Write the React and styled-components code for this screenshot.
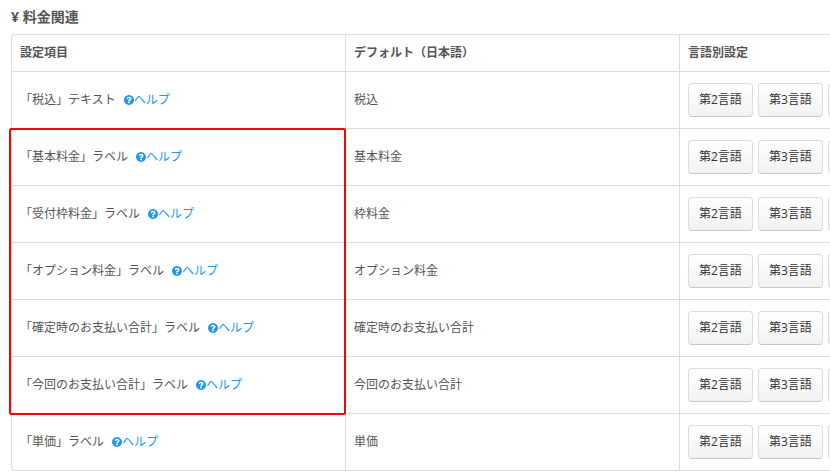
import React from "react";
import styled, { createGlobalStyle } from "styled-components";

const GlobalStyle = createGlobalStyle`
  * {
    box-sizing: border-box;
  }
  body {
    margin: 0;
    overflow: hidden;
    background-color: #fff;
    color: #555;
    font-family: "Open Sans", "Noto Sans CJK JP", sans-serif;
    font-size: 12px;
    line-height: 20px;
  }
`;

const basicRows = [{ label: "「税込」テキスト", value: "税込" }];

const priceRows = [
  { label: "「基本料金」ラベル", value: "基本料金" },
  { label: "「受付枠料金」ラベル", value: "枠料金" },
  { label: "「オプション料金」ラベル", value: "オプション料金" },
  { label: "「確定時のお支払い合計」ラベル", value: "確定時のお支払い合計" },
  { label: "「今回のお支払い合計」ラベル", value: "今回のお支払い合計" },
];

const unitRows = [{ label: "「単価」ラベル", value: "単価" }];

const languages = ["第2言語", "第3言語", "第4言語"];

const QuestionIcon = () => (
  <svg viewBox="128 128 1536 1536" aria-hidden="true">
    <path
      fill="currentColor"
      d="M1024 1376v-192q0-14-9-23t-23-9h-192q-14 0-23 9t-9 23v192q0 14 9 23t23 9h192q14 0 23-9t9-23zm256-672q0-88-55.5-163t-138.5-116-170-41q-243 0-371 213-15 24 8 42l132 100q7 6 19 6 16 0 25-12 53-68 86-92 34-24 86-24 48 0 85.5 26t37.500 59q0 38-20 61t-68 45q-63 28-115.500 86.500t-52.500 125.500v36q0 14 9 23t23 9h192q14 0 23-9t9-23q0-19 21.500-49.500t54.500-49.500q32-18 49-28.500t46-35 44.500-48 28-60.500 12.500-81zm384 192q0 209-103 385.500t-279.500 279.500-385.500 103-385.500-103-279.500-279.500-103-385.500 103-385.500 279.500-279.500 385.500-103 385.500 103 279.500 279.500 103 385.500z"
    />
  </svg>
);

const SettingRow = ({ row, children }) => (
  <tr>
    <Cell>
      {children}
      {row.label}
      <HelpLink href="#help">
        <QuestionIcon />
        ヘルプ
      </HelpLink>
    </Cell>
    <Cell>{row.value}</Cell>
    <Cell>
      <Languages>
        {languages.map((language) => (
          <LanguageButton type="button" key={language}>
            {language}
          </LanguageButton>
        ))}
      </Languages>
    </Cell>
  </tr>
);

const App = () => {
  return (
    <>
      <GlobalStyle />
      <Section>
        <Title>¥ 料金関連</Title>
        <Table>
          <thead>
            <tr>
              <HeadCell>設定項目</HeadCell>
              <HeadCell>デフォルト（日本語）</HeadCell>
              <HeadCell>言語別設定</HeadCell>
            </tr>
          </thead>
          <tbody>
            {basicRows.map((row) => (
              <SettingRow key={row.label} row={row} />
            ))}
          </tbody>
          <MarkedBody>
            {priceRows.map((row, index) => (
              <SettingRow key={row.label} row={row}>
                {index === 0 && <Marker />}
              </SettingRow>
            ))}
          </MarkedBody>
          <tbody>
            {unitRows.map((row) => (
              <SettingRow key={row.label} row={row} />
            ))}
          </tbody>
        </Table>
      </Section>
    </>
  );
};

const Section = styled.section`
  padding: 7px 0 0 11px;
`;

const Title = styled.h2`
  margin: 0 0 7px;
  font-size: 14px;
  font-weight: 700;
  line-height: 20px;
`;

const Table = styled.table`
  width: 100%;
  min-width: 1003px;
  table-layout: fixed;
  border-right: 1px solid #ddd;
  border-collapse: separate;
  border-spacing: 0;
  border-radius: 4px;

  th,
  td {
    border-left: 1px solid #ddd;
    border-bottom: 1px solid #ddd;
  }
  th {
    border-top: 1px solid #ddd;
  }
  th:first-child {
    border-top-left-radius: 4px;
  }
  tbody:last-child tr:last-child td:first-child {
    border-bottom-left-radius: 4px;
  }
`;

const HeadCell = styled.th`
  padding: 8px;
  text-align: left;
  font-weight: 600;
`;

const Cell = styled.td`
  padding: 8px;
  height: 57px;
  vertical-align: middle;
`;

const HelpLink = styled.a`
  margin-left: 8px;
  color: #2196f3;
  text-decoration: none;

  svg {
    width: 10px;
    height: 10px;
    vertical-align: -1px;
  }
`;

const Languages = styled.div`
  display: flex;
  gap: 5px;
`;

const LanguageButton = styled.button`
  flex: none;
  height: 34px;
  padding: 0 10px;
  border: 1px solid #ddd;
  border-bottom-color: #c8c8c8;
  border-radius: 4px;
  background: linear-gradient(#fff, #f2f2f2);
  color: #333;
  font: inherit;
  cursor: pointer;
`;

const MarkedBody = styled.tbody`
  position: relative;
`;

/* red frame drawn over the first column */
const Marker = styled.span`
  position: absolute;
  top: -1px;
  bottom: -1px;
  left: -2px;
  width: 337px;
  border: 2px solid #f00;
  border-radius: 2px;
  pointer-events: none;
`;

export default App;
